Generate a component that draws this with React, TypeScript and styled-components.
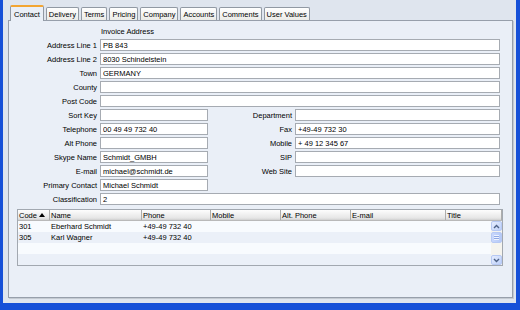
import React from "react";
import styled, { createGlobalStyle } from "styled-components";

const GlobalStyle = createGlobalStyle`
  html, body {
    margin: 0;
    padding: 0;
  }
  body {
    width: 520px;
    height: 310px;
    overflow: hidden;
    font-family: "Liberation Sans", Arial, sans-serif;
    font-size: 7.5px;
    color: #000;
  }
`;

const tabs = ["Contact", "Delivery", "Terms", "Pricing", "Company", "Accounts", "Comments", "User Values"];

const fullRows = [
  ["Address Line 1", "PB 843"],
  ["Address Line 2", "8030 Schindelstein"],
  ["Town", "GERMANY"],
  ["County", ""],
  ["Post Code", ""],
];

const splitRows: [string, string, string | null, string | null][] = [
  ["Sort Key", "", "Department", ""],
  ["Telephone", "00 49 49 732 40", "Fax", "+49-49 732 30"],
  ["Alt Phone", "", "Mobile", "+ 49 12 345 67"],
  ["Skype Name", "Schmidt_GMBH", "SIP", ""],
  ["E-mail", "michael@schmidt.de", "Web Site", ""],
  ["Primary Contact", "Michael Schmidt", null, null],
];

const columns = ["Code", "Name", "Phone", "Mobile", "Alt. Phone", "E-mail", "Title"];

const contacts = [
  { code: "301", name: "Eberhard Schmidt", phone: "+49-49 732 40" },
  { code: "305", name: "Karl Wagner", phone: "+49-49 732 40" },
  null,
  null,
];

function App() {
  return (
    <>
      <GlobalStyle />
      <Window>
        <TabBar>
          {tabs.map((t, i) => (
            <Tab key={t} $active={i === 0}>
              {t}
            </Tab>
          ))}
        </TabBar>
        <Panel>
          <Form>
            <Heading>Invoice Address</Heading>
            {fullRows.map(([label, value]) => (
              <React.Fragment key={label}>
                <Label>{label}</Label>
                <Field $span={3} defaultValue={value} readOnly />
              </React.Fragment>
            ))}
            {splitRows.map(([l1, v1, l2, v2]) => (
              <React.Fragment key={l1}>
                <Label>{l1}</Label>
                <Field $span={1} defaultValue={v1} readOnly />
                {l2 !== null && (
                  <>
                    <Label>{l2}</Label>
                    <Field $span={1} defaultValue={v2 ?? ""} readOnly />
                  </>
                )}
                {l2 === null && <Filler />}
              </React.Fragment>
            ))}
            <Label>Classification</Label>
            <Field $span={3} defaultValue="2" readOnly />
          </Form>
          <Table>
            <Header>
              {columns.map((c, i) => (
                <HeaderCell key={c}>
                  {c}
                  {i === 0 && (
                    <SortArrow width="6" height="4" viewBox="0 0 6 4">
                      <polygon points="0,4 3,0 6,4" fill="#000" />
                    </SortArrow>
                  )}
                </HeaderCell>
              ))}
            </Header>
            <Body>
              <Rows>
                {contacts.map((c, i) => (
                  <Row key={i} $odd={i % 2 === 0}>
                    <Cell>{c?.code}</Cell>
                    <Cell>{c?.name}</Cell>
                    <Cell>{c?.phone}</Cell>
                    <Cell />
                    <Cell />
                    <Cell />
                    <Cell />
                  </Row>
                ))}
              </Rows>
              <ScrollBar>
                <ScrollButton>
                  <svg width="7" height="5" viewBox="0 0 7 5">
                    <polyline points="1,4 3.5,1.5 6,4" fill="none" stroke="#4D6185" strokeWidth="1.4" />
                  </svg>
                </ScrollButton>
                <Thumb>
                  <Grip />
                </Thumb>
                <Track />
                <ScrollButton>
                  <svg width="7" height="5" viewBox="0 0 7 5">
                    <polyline points="1,1 3.5,3.5 6,1" fill="none" stroke="#4D6185" strokeWidth="1.4" />
                  </svg>
                </ScrollButton>
              </ScrollBar>
            </Body>
          </Table>
        </Panel>
      </Window>
    </>
  );
}

export default App;

const Window = styled.div`
  box-sizing: border-box;
  width: 520px;
  height: 310px;
  background: #dfe5ee;
  border-left: 3px solid #1650d8;
  border-right: 4px solid #1650d8;
  border-bottom: 7px solid #1650d8;
  padding: 5px 3px 5px 5px;
  display: flex;
  flex-direction: column;
`;

const TabBar = styled.div`
  height: 15px;
  display: flex;
  align-items: flex-end;
  gap: 2px;
  padding-left: 2px;
  position: relative;
  z-index: 1;
`;

const Tab = styled.div<{ $active: boolean }>`
  box-sizing: border-box;
  height: ${p => (p.$active ? "16px" : "13px")};
  margin-bottom: ${p => (p.$active ? "-1px" : "0")};
  padding: 0 ${p => (p.$active ? "3px" : "2px")};
  border: 1px solid #9199a3;
  border-bottom: none;
  border-top: ${p => (p.$active ? "2px solid #f3a531" : "1px solid #9199a3")};
  border-radius: 2px 2px 0 0;
  background: ${p => (p.$active ? "#eaeff7" : "linear-gradient(#ffffff, #ebebe7)")};
  display: flex;
  align-items: center;
  white-space: nowrap;
`;

const Panel = styled.div`
  flex: 1;
  background: #eaeff7;
  border: 1px solid #979fab;
  box-shadow: 1px 1px 0 #c4cad2;
  padding-top: 4px;
  display: flex;
  flex-direction: column;
`;

const Form = styled.div`
  display: grid;
  grid-template-columns: 91px 108px 87px 205px;
  grid-auto-rows: 12px;
  row-gap: 2px;
`;

const Heading = styled.div`
  grid-column: 2 / span 3;
  display: flex;
  align-items: center;
  padding-left: 1px;
`;

const Label = styled.div`
  display: flex;
  align-items: center;
  justify-content: flex-end;
  padding-right: 3px;
  white-space: nowrap;
`;

const Filler = styled.div`
  grid-column: span 2;
`;

const Field = styled.input<{ $span: number }>`
  grid-column: span ${p => p.$span};
  box-sizing: border-box;
  width: 100%;
  min-width: 0;
  height: 12px;
  margin: 0;
  padding: 0 2px;
  border: 1px solid #a6abb2;
  background: #fff;
  font: inherit;
  color: #000;
  outline: none;
`;

const Table = styled.div`
  box-sizing: border-box;
  height: 57px;
  margin: 4px 9px 0 8px;
  border: 1px solid #a2a8b0;
  background: #f8fbfe;
  display: flex;
  flex-direction: column;
`;

const grid = "32px 92px 69px 70px 70px 95px 1fr";

const Header = styled.div`
  box-sizing: border-box;
  height: 11px;
  display: grid;
  grid-template-columns: ${grid};
  background: linear-gradient(#fdfdfd, #e6e6e6 80%, #cfcfcf);
  border-bottom: 1px solid #b9b9b9;
`;

const HeaderCell = styled.div`
  display: flex;
  align-items: center;
  justify-content: space-between;
  padding: 0 4px 0 1px;
  border-right: 1px solid #adadad;
  white-space: nowrap;
  overflow: hidden;
`;

const SortArrow = styled.svg`
  flex-shrink: 0;
`;

const Body = styled.div`
  flex: 1;
  display: flex;
`;

const Rows = styled.div`
  flex: 1;
  display: flex;
  flex-direction: column;
`;

const Row = styled.div<{ $odd: boolean }>`
  flex: 1;
  display: grid;
  grid-template-columns: ${grid};
  background: ${p => (p.$odd ? "#f8fbfe" : "#ebf0f8")};
`;

const Cell = styled.div`
  display: flex;
  align-items: center;
  padding-left: 1px;
  white-space: nowrap;
  overflow: hidden;
`;

const ScrollBar = styled.div`
  width: 11px;
  display: flex;
  flex-direction: column;
  background: #f5f4ef;
`;

const ScrollButton = styled.div`
  box-sizing: border-box;
  height: 10px;
  border: 1px solid #b7c9f4;
  border-radius: 2px;
  background: linear-gradient(135deg, #e6edfe, #bdd0f9);
  display: flex;
  align-items: center;
  justify-content: center;
`;

const Thumb = styled.div`
  box-sizing: border-box;
  height: 11px;
  margin-top: 1px;
  border: 1px solid #b7c9f4;
  border-radius: 2px;
  background: linear-gradient(90deg, #c9d8fc, #b5c9f7);
  display: flex;
  align-items: center;
  justify-content: center;
`;

const Grip = styled.div`
  width: 5px;
  height: 5px;
  background: repeating-linear-gradient(#eef3ff 0 1px, #8fa8e4 1px 2px);
`;

const Track = styled.div`
  flex: 1;
`;
